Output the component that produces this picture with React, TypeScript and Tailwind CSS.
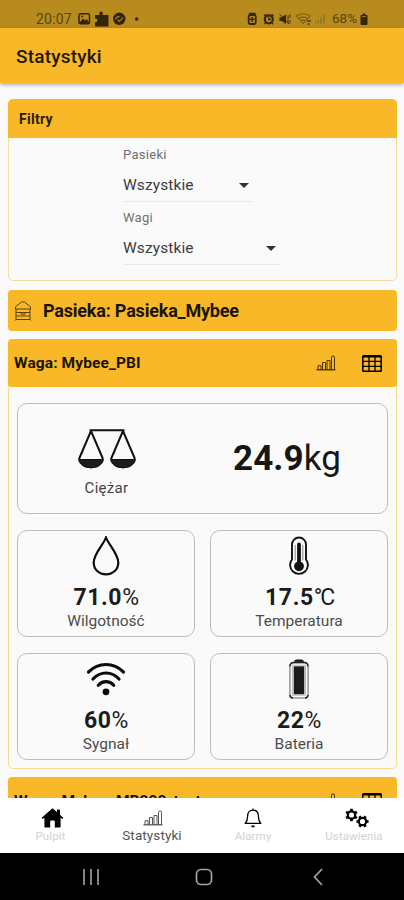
import type { ReactNode } from "react";

const BarsIcon = ({ className }: { className?: string }) => (
	<svg viewBox="0 0 20 16" fill="none" stroke="currentColor" className={className}>
		<path d="M0.5 14.8H19.5" strokeWidth="1.3" />
		<path
			d="M2 15V10.7H5V15M6.5 15V7.5H9.5V15M11 15V5.5H14V15M15.5 15V2.2Q15.5 1 17 1Q18.5 1 18.5 2.2V15"
			strokeWidth="1"
		/>
	</svg>
);

const TableIcon = ({ className }: { className?: string }) => (
	<svg viewBox="0 0 20 17" fill="none" stroke="currentColor" className={className}>
		<rect x="0.8" y="0.8" width="18.4" height="15.4" rx="0.8" strokeWidth="1.5" />
		<path d="M1 1.5H19" strokeWidth="2" />
		<path d="M1 6.3H19M1 11.3H19M7 1V16M13 1V16" strokeWidth="1.3" />
	</svg>
);

const HiveIcon = () => (
	<svg viewBox="0 0 18 20" fill="none" stroke="currentColor" strokeWidth="1" className="h-5 w-[18px] text-[#5c430c]">
		<path d="M1.5 5.8L7.5 1H10.5L16.5 5.8V8H1.5ZM2 8V18.5H16V8M2 11.5H16M2 15H16M2 18.5H16M7 11.7V13.2H11V11.7M1.2 18.5V19.5M16.8 18.5V19.5" />
	</svg>
);

const ScaleIcon = () => (
	<svg viewBox="0 0 60 42" fill="none" stroke="#111" strokeWidth="2" className="h-[42px] w-[60px]">
		<path d="M12.5 2.2H47.5M14 3L2 31M14 3L26 31M46 3L34 31M46 3L58 31" />
		<path
			d="M1.5 31.5H26.5Q25.5 36.5 20 38.9Q14 41 8 38.9Q2.5 36.5 1.5 31.5ZM33.5 31.5H58.5Q57.5 36.5 52 38.9Q46 41 40 38.9Q34.5 36.5 33.5 31.5Z"
			fill="#1c1c1c"
			strokeWidth="1"
			strokeLinejoin="round"
		/>
	</svg>
);

const DropIcon = () => (
	<svg viewBox="0 0 28 40" fill="none" stroke="#0c0c0c" strokeWidth="2.2" className="h-10 w-7">
		<path d="M14 1.5C11.5 8.5 1.7 18 1.7 26.5C1.7 33.5 7 38.4 14 38.4S26.3 33.5 26.3 26.5C26.3 18 16.5 8.5 14 1.5Z" />
	</svg>
);

const ThermometerIcon = () => (
	<svg viewBox="0 0 20 40" fill="none" stroke="#111" className="h-10 w-5">
		<path d="M3 23.5V8.5A7 7 0 0 1 17 8.5V23.5A8.9 8.9 0 1 1 3 23.5Z" strokeWidth="1.9" />
		<path d="M10 8.5V29" strokeWidth="3.8" strokeLinecap="round" />
		<path d="M6.2 24.5V9M13.8 24.5V9" strokeWidth="0.5" />
		<circle cx="10" cy="30.3" r="4.9" fill="#111" stroke="none" />
	</svg>
);

const SignalIcon = () => (
	<svg viewBox="0 0 40 34" fill="none" stroke="#0c0c0c" strokeWidth="3.2" strokeLinecap="round" className="h-[34px] w-10">
		<path d="M2.5 10Q10 2.5 20 2.5T37.5 10M7 17Q12.5 11 20 11T33 17M12.3 23.3Q15.5 19.7 20 19.7T27.7 23.3" />
		<circle cx="20" cy="29.8" r="3.4" fill="#0c0c0c" stroke="none" />
	</svg>
);

const BatteryIcon = () => (
	<svg viewBox="0 0 20 40" fill="none" className="h-10 w-5">
		<path d="M5 3.5Q5 0.5 8 0.5H12Q15 0.5 15 3.5Z" fill="#111" />
		<rect x="0.9" y="3.5" width="18.2" height="35.5" rx="3.5" stroke="#999" strokeWidth="1.6" />
		<path
			d="M1 7.5Q1 3.5 5 3.5H15Q19 3.5 19 7.5M1 36Q1 39 4 39M19 36Q19 39 16 39"
			stroke="#222"
			strokeWidth="1.4"
		/>
		<rect x="3.6" y="6.2" width="12.8" height="30" stroke="#aaa" strokeWidth="0.8" />
		<rect x="4.7" y="7.3" width="10.6" height="28" fill="#1a1a1a" />
	</svg>
);

const HomeIcon = () => (
	<svg viewBox="0 0 23 20" fill="#000" className="ml-[3px] h-5 w-[23px]">
		<path d="M11.5 0.3L22.3 9.7L21.3 11L19.6 9.7V18.5Q19.6 19.5 18.6 19.5H13.8V13.5Q13.8 12.6 12.9 12.6H10.1Q9.2 12.6 9.2 13.5V19.5H4.4Q3.4 19.5 3.4 18.5V9.7L1.7 11L0.7 9.7Z" />
		<path d="M16 1.6H19V7H16Z" />
	</svg>
);

const BellIcon = () => (
	<svg viewBox="0 0 18 20" fill="none" stroke="#000" strokeWidth="1.3" className="ml-px h-5 w-[18px]">
		<path d="M9 0.5V2.2M9 2.2C5.3 2.2 3.6 5 3.6 8.2C3.6 12.5 2.5 14 1.2 15.4H16.8C15.5 14 14.4 12.5 14.4 8.2C14.4 5 12.7 2.2 9 2.2Z" strokeLinejoin="round" />
		<path d="M7 17.5H11Q10.6 19.5 9 19.5T7 17.5Z" fill="#000" stroke="none" />
	</svg>
);

const CogsIcon = () => (
	<svg viewBox="0 0 24 20" fill="none" stroke="#000" className="ml-[6px] h-5 w-6">
		<circle cx="6.5" cy="7" r="3.7" strokeWidth="2.2" />
		<path d="M6.5 0.8V3M6.5 11V13.2M1.1 3.9L3 5M10 9L11.9 10.1M1.1 10.1L3 9M10 5L11.9 3.9" strokeWidth="2.6" />
		<circle cx="17.5" cy="13.5" r="3.7" strokeWidth="2.2" />
		<path d="M11.4 13.5H13.5M21.5 13.5H23.6M14.4 8.2L15.5 10M19.5 17L20.6 18.8M14.4 18.8L15.5 17M19.5 10L20.6 8.2" strokeWidth="2.6" />
	</svg>
);

const StatusBar = () => (
	<div className="flex h-7 shrink-0 items-center bg-[#b88b1f] pt-[9px] pl-9 text-[#5a4410]">
		<span className="w-[42px] text-[14px] leading-none tracking-[0.2px]">20:07</span>
		<svg viewBox="0 0 62 16" className="h-4 w-[62px] text-[#33260a]" fill="none" stroke="currentColor">
			<rect x="1" y="2.8" width="10.5" height="10" rx="1.5" strokeWidth="1.5" />
			<path d="M2 11L5 7.5L7 9.5L8.5 8L11 11V12.5H2Z" fill="currentColor" stroke="none" />
			<circle cx="4.2" cy="5.5" r="1" fill="currentColor" stroke="none" />
			<path d="M17 4H21.5Q20.8 0.5 23 0.5T24.8 4H30.5V15.5H17V11.5Q19.5 11 19.5 9.3T17 7.6Z" fill="currentColor" stroke="none" />
			<circle cx="41.3" cy="7.8" r="6.2" fill="currentColor" stroke="none" />
			<path d="M37.5 8.2Q39.5 4.5 41.5 6.2M45 6.5L41.3 10.5L39.5 8.5" stroke="#b88b1f" strokeWidth="1.1" />
			<circle cx="58.7" cy="8" r="1.7" fill="currentColor" stroke="none" />
		</svg>
		<svg viewBox="0 0 84 16" className="ml-[106px] h-4 w-[84px] text-[#33260a]" fill="none" stroke="currentColor">
			<path d="M3.5 4V2.3H9V4" strokeWidth="1.2" />
			<rect x="2.7" y="4" width="7" height="9" rx="1.5" strokeWidth="1.8" />
			<path d="M6.2 5.7V11M4 8.3H8.5" strokeWidth="1.4" />
			<circle cx="22.8" cy="8.3" r="4" strokeWidth="2.2" />
			<path d="M22.8 6V8.5H24.8M18.2 5L20 3.2M25.6 3.2L27.4 5M19.5 12L18.5 13.2M26 12L27.2 13.2" strokeWidth="1.3" />
			<path d="M33.5 6.2H36L40 3.2V13L36 10H33.5Z" fill="currentColor" stroke="none" />
			<path d="M42 4V12M44 3.5V7M44 9V12.5M33.5 3L43 13" strokeWidth="0.9" />
			<g stroke="#7c5e16">
				<path d="M50.5 5Q57 0.5 64 5L57.3 12.5ZM53 7.5Q57.3 4.8 61 7.5M55 9.8Q57 8.5 59 9.8" strokeWidth="1.1" />
				<path d="M61 10H65M61.5 13H63.5" strokeWidth="1.5" stroke="#4d3a0e" />
				<path d="M69.5 12.5V10.8M72 12.5V9M75 12.5V6.5M78 12.5V3.5" strokeWidth="0.9" />
			</g>
		</svg>
		<span className="ml-[2px] w-7 text-[13.5px] leading-none">68%</span>
		<svg viewBox="0 0 8 12" className="h-3 w-2 text-[#33260a]" fill="currentColor">
			<path d="M2.5 0.5H5.5V2H7Q7.5 2 7.5 3V11Q7.5 12 6.5 12H1.5Q0.5 12 0.5 11V3Q0.5 2 1 2H2.5Z" />
			<path d="M2 3.5H6" stroke="#b88b1f" strokeWidth="0.8" />
		</svg>
	</div>
);

const Select = ({ label, value, className }: { label: string; value: string; className: string }) => (
	<div className={className}>
		<p className="h-[31px] pt-[7px] text-[13px] leading-[18px] tracking-[0.3px] text-[#707070]">{label}</p>
		<div className="flex h-8 items-center justify-between border-b border-[#e9e9e9] pr-1 text-[#3c3c3c]">
			<span className="text-[15.5px] tracking-[0.1px]">{value}</span>
			<svg viewBox="0 0 10 5" className="h-[5px] w-[10px]" fill="#333">
				<path d="M0 0H10L5 5Z" />
			</svg>
		</div>
	</div>
);

const ScaleHeader = ({ name }: { name: string }) => (
	<div className="flex h-12 items-center rounded-[4px] bg-[#f9b827] pr-[15px] pl-[6px] text-black">
		<h2 className="flex-1 pt-[2px] text-[15.5px] font-bold tracking-[0.1px] text-[#191404]">{name}</h2>
		<BarsIcon className="mr-[26px] h-4 w-5 text-[#48350a]" />
		<TableIcon className="h-[17px] w-5" />
	</div>
);

type TileProps = { icon: ReactNode; value: string; unit: ReactNode; label: string };

const Tile = ({ icon, value, unit, label }: TileProps) => (
	<div className="flex h-[107px] flex-col items-center rounded-[10px] border border-[#bebebe] pt-[5px]">
		<div className="flex h-10 items-center">{icon}</div>
		<p className="mt-2 text-[23px] leading-7 tracking-[0.6px] text-[#1c1c1c]">
			<b className="font-bold">{value}</b>
			<span className="tracking-[-0.5px]">{unit}</span>
		</p>
		<p className="text-[15.5px] leading-[19px] text-[#4c4c4c]">{label}</p>
	</div>
);

const tiles: TileProps[] = [
	{ icon: <DropIcon />, value: "71.0", unit: "%", label: "Wilgotność" },
	{
		icon: <ThermometerIcon />,
		value: "17.5",
		unit: <span className="tracking-[-2.2px]">°C</span>,
		label: "Temperatura",
	},
	{ icon: <SignalIcon />, value: "60", unit: "%", label: "Sygnał" },
	{ icon: <BatteryIcon />, value: "22", unit: "%", label: "Bateria" },
];

const App = () => {
	return (
		<div className="flex h-[900px] w-[404px] flex-col overflow-hidden bg-[#fafafa] font-['Roboto',sans-serif]">
			<StatusBar />
			<header className="z-10 flex h-[55px] shrink-0 items-center bg-[#f9b827] pt-[3px] pl-4 shadow-[0_2px_4px_rgba(0,0,0,0.3)]">
				<h1 className="text-[19px] font-medium tracking-[0.2px] text-[#1f1804]">Statystyki</h1>
			</header>

			<main className="min-h-0 flex-1 overflow-hidden pt-4 pr-[7px] pl-2">
				<section className="h-[182px] rounded-[5px] border-[1.5px] border-[#f5dc9c]">
					<div className="-mx-px -mt-px flex h-[39px] items-center rounded-t-[5px] bg-[#f9b827] pt-px pl-[11px]">
						<h2 className="text-[14px] font-bold tracking-[0.3px] text-[#2a2006]">Filtry</h2>
					</div>
					<div className="flex flex-col pl-[114px]">
						<Select label="Pasieki" value="Wszystkie" className="w-[130px] pt-px" />
						<Select label="Wagi" value="Wszystkie" className="w-[157px]" />
					</div>
				</section>

				<div className="mt-[9px] flex h-[41px] items-center gap-[11px] rounded-[4px] bg-[#f9b827] pl-[6px]">
					<HiveIcon />
					<h2 className="text-[18px] font-bold tracking-[-0.2px] text-[#191404]">Pasieka: Pasieka_Mybee</h2>
				</div>

				<section className="mt-2 h-[430px] rounded-[5px] border-[1.5px] border-[#f6d98f]">
					<div className="-mx-px -mt-px">
						<ScaleHeader name="Waga: Mybee_PBI" />
					</div>
					<div className="px-2 pt-4">
						<div className="flex h-[111px] rounded-[10px] border border-[#bebebe]">
							<div className="flex w-[177px] flex-col items-center pt-[24px]">
								<ScaleIcon />
								<p className="mt-2 text-[15px] leading-5 tracking-[0.3px] text-[#444]">Ciężar</p>
							</div>
							<p className="flex flex-1 items-center justify-center pt-[2px] pr-[8px] text-[35px] tracking-[0.1px] text-[#161616]">
								<b className="font-bold">24.9</b>kg
							</p>
						</div>
						<div className="mt-4 grid grid-cols-2 gap-x-[15px] gap-y-4">
							{tiles.map((t) => (
								<Tile key={t.label} {...t} />
							))}
						</div>
					</div>
				</section>

				<section className="mt-2 h-[430px]">
					<ScaleHeader name="Waga: Mybee_MB200_test" />
				</section>
			</main>

			<nav className="grid h-[55px] shrink-0 grid-cols-4 bg-white pt-[10px]">
				<div className="flex flex-col items-center">
					<HomeIcon />
					<span className="text-[11.5px] leading-[17px] tracking-[0.1px] text-[#d2d2d2]">Pulpit</span>
				</div>
				<div className="flex flex-col items-center">
					<BarsIcon className="mt-[2px] ml-[2px] h-4 w-5 text-[#555]" />
					<span className="ml-px text-[13.5px] leading-[18px] tracking-[0.1px] text-[#555]">Statystyki</span>
				</div>
				<div className="flex flex-col items-center">
					<BellIcon />
					<span className="ml-px text-[11.5px] leading-[17px] tracking-[0.1px] text-[#d2d2d2]">Alarmy</span>
				</div>
				<div className="flex flex-col items-center">
					<CogsIcon />
					<span className="ml-px text-[11.5px] leading-[17px] tracking-[0.1px] text-[#d2d2d2]">Ustawienia</span>
				</div>
			</nav>

			<footer className="flex h-[47px] shrink-0 items-center bg-black pl-[83px] text-[#a5a5a5]">
				<svg viewBox="0 0 16 16" className="h-4 w-4" fill="none" stroke="currentColor" strokeWidth="1.6">
					<path d="M1 0V16M8 0V16M15 0V16" />
				</svg>
				<svg viewBox="0 0 18 18" className="ml-[96px] h-[18px] w-[18px]" fill="none" stroke="currentColor" strokeWidth="1.7">
					<rect x="1.5" y="1.5" width="15" height="15" rx="4.5" />
				</svg>
				<svg viewBox="0 0 10 18" className="ml-[100px] h-[18px] w-[10px]" fill="none" stroke="currentColor" strokeWidth="1.7">
					<path d="M9 1L1.5 9L9 17" />
				</svg>
			</footer>
		</div>
	);
};

export default App;
